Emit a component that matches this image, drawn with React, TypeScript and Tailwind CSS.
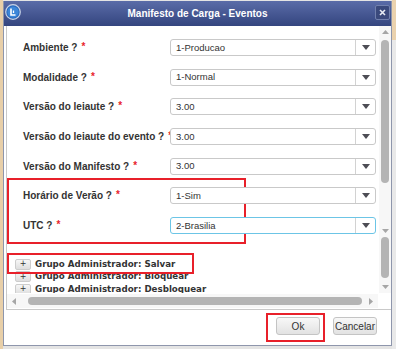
import React from "react";

const rows: { label: string; value: string; focus?: boolean }[] = [
  { label: "Ambiente ?", value: "1-Producao" },
  { label: "Modalidade ?", value: "1-Normal" },
  { label: "Versão do leiaute ?", value: "3.00" },
  { label: "Versão do leiaute do evento ?", value: "3.00" },
  { label: "Versão do Manifesto ?", value: "3.00" },
  { label: "Horário de Verão ?", value: "1-Sim" },
  { label: "UTC ?", value: "2-Brasilia", focus: true },
];

const groups = [
  "Grupo Administrador: Salvar",
  "Grupo Administrador: Bloquear",
  "Grupo Administrador: Desbloquear",
];

function Select({ value, focus }: { value: string; focus?: boolean }) {
  return (
    <div
      className={
        focus
          ? "relative z-10 flex h-[17px] w-[206px] shrink-0 rounded-[3px] border border-[#6cc5e6] bg-white"
          : "relative z-10 flex h-[17px] w-[206px] shrink-0 rounded-[3px] border border-[#c9c9c9] bg-white"
      }
    >
      <div className="flex flex-1 items-center pl-[5px] text-[9.5px] leading-none text-[#333]">
        {value}
      </div>
      <div className="flex w-[20px] items-center justify-center border-l border-[#d2d2d2]">
        <svg width="8" height="5" viewBox="0 0 8 5">
          <path d="M0 0 H8 L4 5 Z" fill="#4d4d55" />
        </svg>
      </div>
    </div>
  );
}

function ArrowV({ up }: { up?: boolean }) {
  return (
    <svg width="7" height="4" viewBox="0 0 7 4">
      <path d={up ? "M0 4 H7 L3.5 0 Z" : "M0 0 H7 L3.5 4 Z"} fill="#a6a6a6" />
    </svg>
  );
}

export default function App() {
  return (
    <div className="relative flex h-[349px] w-[396px] overflow-hidden bg-[#e4e4e4] font-['Liberation_Sans',Arial,sans-serif]">
      {/* left background strip */}
      <div className="w-[3px] shrink-0 bg-[#e8cfa8]" />

      {/* dialog */}
      <div className="mt-[1px] flex h-[345px] w-[389px] shrink-0 flex-col border-x border-b border-[#8e96ac] bg-white">
        {/* title bar */}
        <div className="relative flex h-[25px] shrink-0 items-center justify-center bg-gradient-to-b from-[#5a6ca8] to-[#34457f]">
          <div className="absolute left-[1px] top-[3px]">
            <svg width="16" height="16" viewBox="0 0 16 16">
              <circle cx="8" cy="8" r="7.3" fill="#2a6bc0" stroke="#c9d3e6" strokeWidth="1.2" />
              <circle cx="8" cy="8" r="5.6" fill="#3c86d8" />
              <path d="M6 4.5 V11 H10.5" stroke="#ffffff" strokeWidth="1.6" fill="none" />
              <path d="M8.5 6.5 V9" stroke="#ffffff" strokeWidth="1.3" fill="none" />
            </svg>
          </div>
          <span className="text-[10px] font-bold text-white">Manifesto de Carga - Eventos</span>
          <div className="absolute right-[1px] top-[4px] flex h-[15px] w-[15px] items-center justify-center rounded-[2px] border border-[#7180ad] bg-[#3a497c]">
            <svg width="7" height="7" viewBox="0 0 7 7">
              <path d="M1 1 L6 6 M6 1 L1 6" stroke="#e8ecf4" strokeWidth="1.6" />
            </svg>
          </div>
        </div>

        {/* panel */}
        <div className="ml-[2px] flex h-[284px] shrink-0 flex-col border-b border-l border-[#c9c9c9]">
          <div className="flex h-[267px]">
            <div className="relative flex-1 overflow-hidden">
              <div className="flex flex-col gap-[12.67px] pl-[16px] pt-[13px]">
                {rows.map((r) => (
                  <div key={r.label} className="flex items-start">
                    <div className="w-[147px] shrink-0 whitespace-nowrap pt-[2px] text-[10px] font-bold leading-[13px] text-[#333]">
                      {r.label}
                      <span className="relative top-[-1px] ml-[4px] text-[#e8232c]">*</span>
                    </div>
                    <Select value={r.value} focus={r.focus} />
                  </div>
                ))}
              </div>
              <div className="mt-[24px] flex flex-col pl-[8px]">
                {groups.map((g) => (
                  <div key={g} className="flex h-[12.5px] items-center gap-[4px]">
                    <div className="flex h-[11px] w-[16px] shrink-0 items-center justify-center rounded-[2px] border border-[#cdcdcd] bg-gradient-to-b from-[#f7f7f7] to-[#dedede] font-['DejaVu_Sans',sans-serif] text-[8px] leading-none text-[#333]">
                      +
                    </div>
                    <span className="whitespace-nowrap font-['DejaVu_Sans',sans-serif] text-[8.7px] font-bold text-[#333]">
                      {g}
                    </span>
                  </div>
                ))}
              </div>
            </div>
            {/* vertical scrollbar */}
            <div className="flex w-[12px] shrink-0 flex-col items-center bg-[#f7f7f7]">
              <div className="flex h-[12px] items-center">
                <ArrowV up />
              </div>
              <div className="mt-[2px] h-[143px] w-[8px] rounded-full bg-[#b4b4b4]" />
              <div className="mt-[43px] flex h-[10px] items-center">
                <ArrowV />
              </div>
              <div className="mt-[1px] h-[41px] w-[8px] rounded-full bg-[#b4b4b4]" />
              <div className="mt-[3px] flex h-[11px] items-center">
                <ArrowV />
              </div>
            </div>
          </div>
          {/* horizontal scrollbar */}
          <div className="flex h-[16px] items-center">
            <div className="flex h-[14px] w-[371px] items-center bg-[#f7f7f7]">
              <div className="flex w-[14px] justify-center">
                <svg width="4" height="7" viewBox="0 0 4 7">
                  <path d="M4 0 V7 L0 3.5 Z" fill="#a6a6a6" />
                </svg>
              </div>
              <div className="ml-[7px] h-[8px] w-[334px] rounded-full bg-[#b4b4b4]" />
              <div className="ml-[5px] flex w-[8px] justify-center">
                <svg width="4" height="7" viewBox="0 0 4 7">
                  <path d="M0 0 V7 L4 3.5 Z" fill="#a6a6a6" />
                </svg>
              </div>
            </div>
            <div className="h-[14px] flex-1 bg-white" />
          </div>
        </div>

        {/* footer */}
        <div className="flex flex-1 items-start justify-end gap-[13px] bg-white pr-[14px] pt-[7px]">
          <button className="flex h-[18px] w-[44px] items-center justify-center rounded-[3px] border border-[#c4c4c4] bg-gradient-to-b from-[#f8f8f8] to-[#e2e2e2] text-[10px] text-[#333]">
            Ok
          </button>
          <button className="flex h-[18px] w-[44px] items-center justify-center rounded-[3px] border border-[#c4c4c4] bg-gradient-to-b from-[#f8f8f8] to-[#e2e2e2] text-[10px] text-[#333]">
            Cancelar
          </button>
        </div>
      </div>

      {/* right background strip */}
      <div className="flex flex-1 flex-col">
        <div className="h-[40px] bg-[#ead2ae]" />
        <div className="flex-1 bg-[#e9e9e9]" />
      </div>

      {/* annotation boxes */}
      <div className="pointer-events-none absolute left-[7px] top-[178px] h-[66px] w-[239px] border-2 border-[#e8202a]" />
      <div className="pointer-events-none absolute left-[7px] top-[253px] h-[21px] w-[187px] border-2 border-[#e8202a]" />
      <div className="pointer-events-none absolute left-[266px] top-[313px] h-[29px] w-[59px] border-2 border-[#e8202a]" />
    </div>
  );
}
